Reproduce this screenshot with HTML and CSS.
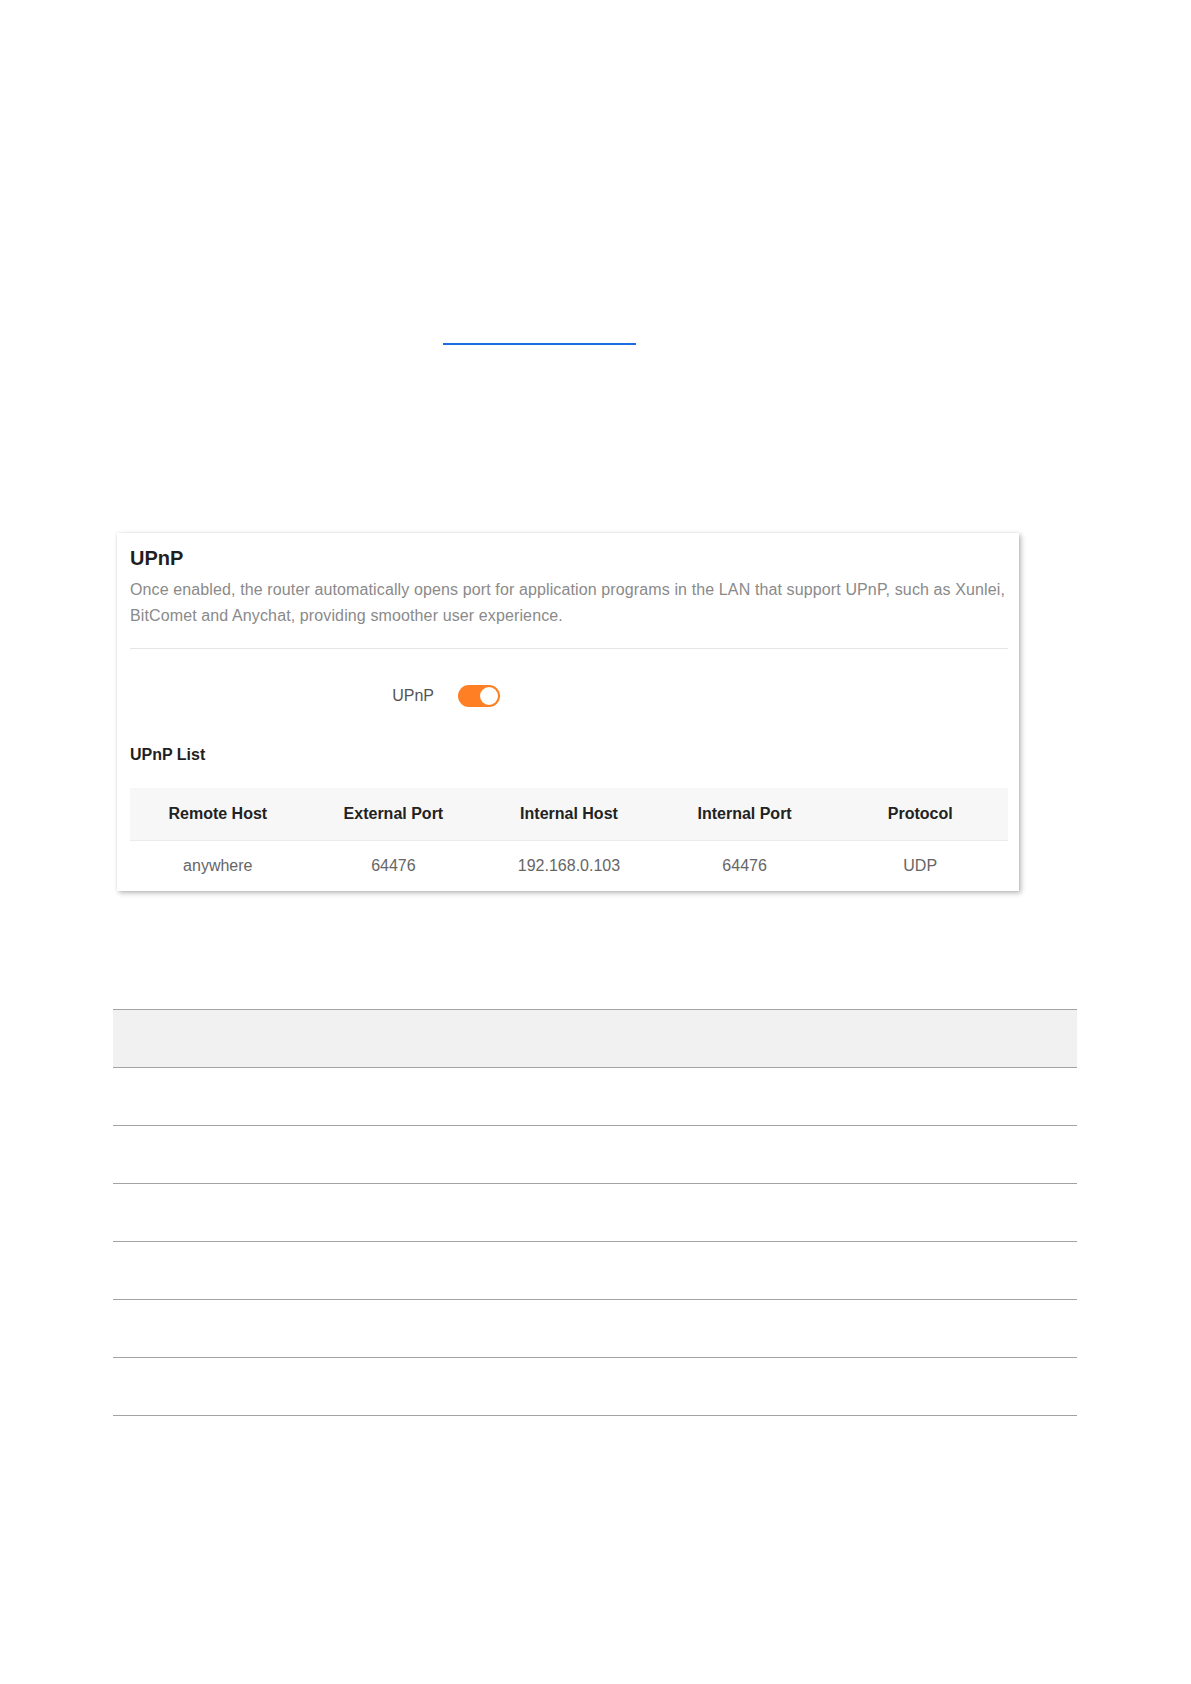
FILE: index.html
```html
<!DOCTYPE html>
<html lang="en">
<head>
<meta charset="utf-8">
<title>UPnP</title>
<link rel="stylesheet" href="styles.css">
</head>
<body>
<div class="page">
  <div class="link-line"></div>

  <section class="card">
    <h1 class="card-title">UPnP</h1>
    <p class="card-desc">Once enabled, the router automatically opens port for application programs in the LAN that support UPnP, such as Xunlei, BitComet and Anychat, providing smoother user experience.</p>
    <div class="divider"></div>

    <div class="field-row">
      <span class="field-label">UPnP</span>
      <span class="switch"><span class="knob"></span></span>
    </div>

    <h2 class="list-title">UPnP List</h2>

    <table class="upnp-table">
      <thead>
        <tr>
          <th>Remote Host</th>
          <th>External Port</th>
          <th>Internal Host</th>
          <th>Internal Port</th>
          <th>Protocol</th>
        </tr>
      </thead>
      <tbody>
        <tr>
          <td>anywhere</td>
          <td>64476</td>
          <td>192.168.0.103</td>
          <td>64476</td>
          <td>UDP</td>
        </tr>
      </tbody>
    </table>
  </section>

  <table class="doc-table">
    <thead>
      <tr><th></th></tr>
    </thead>
    <tbody>
      <tr><td></td></tr>
      <tr><td></td></tr>
      <tr><td></td></tr>
      <tr><td></td></tr>
      <tr><td></td></tr>
      <tr><td></td></tr>
    </tbody>
  </table>
</div>
</body>
</html>
```

FILE: styles.css
```css
html, body {
  margin: 0;
  padding: 0;
  background: #ffffff;
}

body {
  font-family: "Liberation Sans", Arial, sans-serif;
  color: #333333;
}

.page {
  width: 1191px;
  min-height: 1684px;
  padding-top: 343px;
  box-sizing: border-box;
}

.link-line {
  margin-left: 443px;
  width: 193px;
  height: 1.5px;
  background: #1a6ee0;
}

.card {
  margin: 188px 0 0 117px;
  width: 902px;
  box-sizing: border-box;
  padding: 11px 11px 0 13px;
  background: #ffffff;
  box-shadow: 2px 2px 5px rgba(0, 0, 0, 0.28), 0 0 2px rgba(0, 0, 0, 0.08);
}

.card-title {
  margin: 0;
  font-size: 20px;
  line-height: 28px;
  font-weight: bold;
  color: #1f1f1f;
}

.card-desc {
  margin: 5px 0 0 0;
  font-size: 16px;
  line-height: 26px;
  letter-spacing: 0.12px;
  color: #8a8a8a;
}

.divider {
  margin-top: 19px;
  height: 1px;
  background: #e6e6e6;
}

.field-row {
  margin-top: 36px;
  display: flex;
  align-items: center;
  height: 22px;
}

.field-label {
  width: 328px;
  padding-right: 24px;
  box-sizing: border-box;
  text-align: right;
  font-size: 16px;
  color: #555555;
}

.switch {
  position: relative;
  display: inline-block;
  width: 42px;
  height: 22px;
  border-radius: 11px;
  background: #ff7f24;
}

.knob {
  position: absolute;
  top: 2px;
  right: 2px;
  width: 18px;
  height: 18px;
  border-radius: 50%;
  background: #ffffff;
}

.list-title {
  margin: 36px 0 0 0;
  font-size: 16px;
  line-height: 24px;
  font-weight: bold;
  color: #1f1f1f;
}

.upnp-table {
  margin-top: 21px;
  width: 100%;
  border-collapse: collapse;
  table-layout: fixed;
  font-size: 16px;
}

.upnp-table th {
  height: 52px;
  padding: 0;
  background: #f7f7f7;
  border-bottom: 1px solid #ebebeb;
  font-weight: bold;
  color: #222222;
  text-align: center;
}

.upnp-table td {
  height: 50px;
  padding: 0;
  color: #666666;
  text-align: center;
}

.doc-table {
  margin: 118px 0 0 113px;
  width: 964px;
  border-collapse: collapse;
}

.doc-table th,
.doc-table td {
  height: 57px;
  padding: 0;
  border-top: 1px solid #a3a3a3;
  border-bottom: 1px solid #a3a3a3;
}

.doc-table th {
  background: #f1f1f1;
}
```
